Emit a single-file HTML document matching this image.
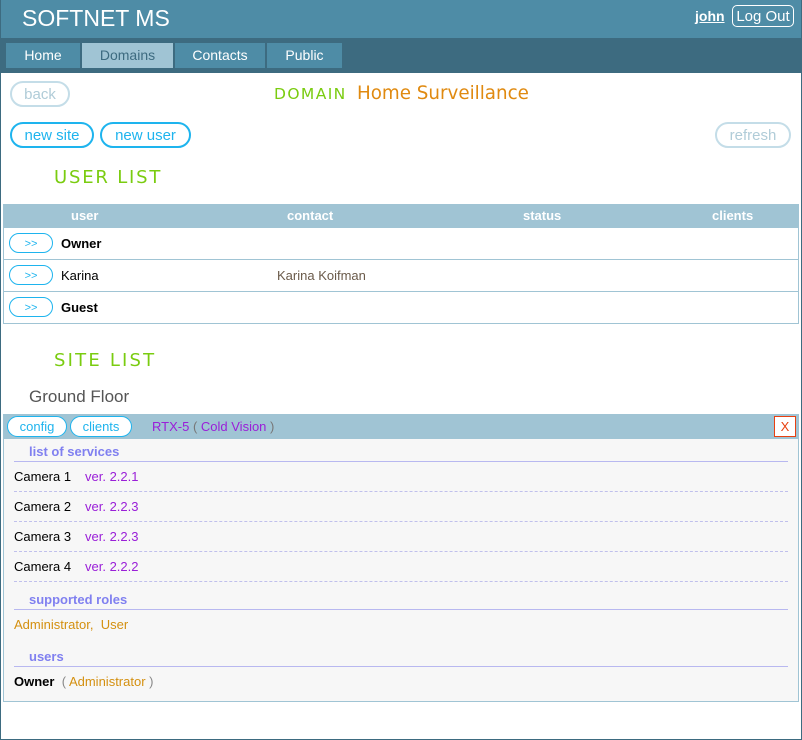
<!DOCTYPE html>
<html><head><meta charset="utf-8"><style>
*{margin:0;padding:0;box-sizing:border-box}
body{width:802px;height:740px;position:relative;background:#fff;font-family:"Liberation Sans",Arial,sans-serif;overflow:hidden}
.a{position:absolute;white-space:nowrap}
.frame{position:absolute;left:0;top:0;width:802px;height:740px;border:1px solid #3d6b80;border-top:0;pointer-events:none}
.hdr{left:0;top:0;width:802px;height:38px;background:#4e8ca6}
.nav{left:0;top:38px;width:802px;height:35px;background:#3d6b80}
.tab{top:43px;height:25px;background:#4e8ca6;color:#fff;font-size:14px;text-align:center;line-height:25px}
.pill{border:2px solid #1eb4ee;border-radius:13px;color:#1eb4ee;font-size:15px;text-align:center;background:#fff}
.dis{border-color:#c4dde8;color:#b0ccd8}
.verd{font-family:"DejaVu Sans",Verdana,sans-serif}
.th{top:204px;left:3px;width:796px;height:24px;background:#a0c4d4}
.th span{position:absolute;color:#fff;font-weight:bold;font-size:13px;top:4px}
.row{left:3px;width:796px;height:32px;border:1px solid #a0c4d4;border-top:0;background:#fff}
.sm{border:1px solid #1eb4ee;border-radius:10px;color:#1eb4ee;font-size:11px;width:44px;height:20px;line-height:21px;text-align:center}
.nm{font-size:13px;color:#000}
.sec{color:#8080f0;font-weight:bold;font-size:13px}
.ln{left:14px;width:774px;height:0;border-top:1px solid #b8b8f0}
.dl{left:14px;width:774px;height:0;border-top:1px dashed #c0c0ec}
.cam{font-size:13px;color:#000}
.ver{color:#9a1fd8;font-size:13px}
.org{color:#d49010;font-size:13px}
</style></head><body>
<div class="a hdr"></div>
<div class="a" style="left:22px;top:5px;color:#fff;font-size:23px">SOFTNET MS</div>
<div class="a" style="left:695px;top:8px;color:#fff;font-size:14px;font-weight:bold;text-decoration:underline">john</div>
<div class="a" style="left:732px;top:5px;width:62px;height:22px;border:1px solid #fff;border-radius:5px;color:#fff;font-size:15px;text-align:center;line-height:21px">Log Out</div>
<div class="a nav"></div>
<div class="a tab" style="left:6px;width:74px">Home</div>
<div class="a tab" style="left:82px;width:91px;background:#a0c4d4;color:#3d6b80">Domains</div>
<div class="a tab" style="left:175px;width:90px">Contacts</div>
<div class="a tab" style="left:267px;width:75px">Public</div>

<div class="a pill dis" style="left:10px;top:81px;width:60px;height:26px;line-height:24px">back</div>
<div class="a verd" style="left:274px;top:85px;font-size:15.5px;color:#7acc10;letter-spacing:1.4px">DOMAIN</div>
<div class="a verd" style="left:357px;top:83px;font-size:18.3px;color:#e08a10">Home Surveillance</div>

<div class="a pill" style="left:10px;top:122px;width:84px;height:26px;line-height:24px">new site</div>
<div class="a pill" style="left:100px;top:122px;width:91px;height:26px;line-height:24px">new user</div>
<div class="a pill dis" style="left:715px;top:122px;width:76px;height:26px;line-height:24px">refresh</div>

<div class="a verd" style="left:54px;top:167px;font-size:18px;color:#7acc10;letter-spacing:1.8px">USER LIST</div>

<div class="a th"><span style="left:68px">user</span><span style="left:284px">contact</span><span style="left:520px">status</span><span style="left:709px">clients</span></div>
<div class="a row" style="top:228px"></div>
<div class="a row" style="top:260px"></div>
<div class="a row" style="top:292px"></div>
<div class="a sm" style="left:9px;top:233px">&gt;&gt;</div>
<div class="a nm" style="left:61px;top:236px;font-weight:bold">Owner</div>
<div class="a sm" style="left:9px;top:265px">&gt;&gt;</div>
<div class="a nm" style="left:61px;top:268px">Karina</div>
<div class="a" style="left:277px;top:268px;font-size:13px;color:#6a5a4a">Karina Koifman</div>
<div class="a sm" style="left:9px;top:297px">&gt;&gt;</div>
<div class="a nm" style="left:61px;top:300px;font-weight:bold">Guest</div>

<div class="a verd" style="left:54px;top:350px;font-size:18px;color:#7acc10;letter-spacing:2.2px">SITE LIST</div>
<div class="a" style="left:29px;top:387px;font-size:17px;color:#555">Ground Floor</div>

<div class="a" style="left:3px;top:414px;width:796px;height:288px;border:1px solid #a0c4d4;background:#f7f7f7"></div>
<div class="a" style="left:3px;top:414px;width:796px;height:25px;background:#a0c4d4"></div>
<div class="a pill" style="left:7px;top:416px;width:60px;height:21px;line-height:20px;font-size:13px;border-width:1px;border-radius:11px">config</div>
<div class="a pill" style="left:70px;top:416px;width:62px;height:21px;line-height:20px;font-size:13px;border-width:1px;border-radius:11px">clients</div>
<div class="a" style="left:152px;top:419px;font-size:13px;color:#9a1fd8">RTX-5 <span style="color:#777">(</span> Cold Vision <span style="color:#777">)</span></div>
<div class="a" style="left:774px;top:416px;width:22px;height:21px;border:1px solid #e84010;background:#fff;color:#e84010;font-size:13px;text-align:center;line-height:19px">X</div>

<div class="a sec" style="left:29px;top:444px">list of services</div>
<div class="a ln" style="top:461px"></div>
<div class="a cam" style="left:14px;top:469px">Camera 1</div><div class="a ver" style="left:85px;top:469px">ver. 2.2.1</div>
<div class="a dl" style="top:491px"></div>
<div class="a cam" style="left:14px;top:499px">Camera 2</div><div class="a ver" style="left:85px;top:499px">ver. 2.2.3</div>
<div class="a dl" style="top:521px"></div>
<div class="a cam" style="left:14px;top:529px">Camera 3</div><div class="a ver" style="left:85px;top:529px">ver. 2.2.3</div>
<div class="a dl" style="top:551px"></div>
<div class="a cam" style="left:14px;top:559px">Camera 4</div><div class="a ver" style="left:85px;top:559px">ver. 2.2.2</div>
<div class="a dl" style="top:581px"></div>
<div class="a sec" style="left:29px;top:592px">supported roles</div>
<div class="a ln" style="top:609px"></div>
<div class="a org" style="left:14px;top:617px">Administrator,&nbsp; User</div>
<div class="a sec" style="left:29px;top:649px">users</div>
<div class="a ln" style="top:666px"></div>
<div class="a" style="left:14px;top:674px;font-size:13px"><b>Owner</b> &nbsp;<span style="color:#888">(</span> <span style="color:#d49010">Administrator</span> <span style="color:#888">)</span></div>

<div class="frame"></div>
</body></html>
